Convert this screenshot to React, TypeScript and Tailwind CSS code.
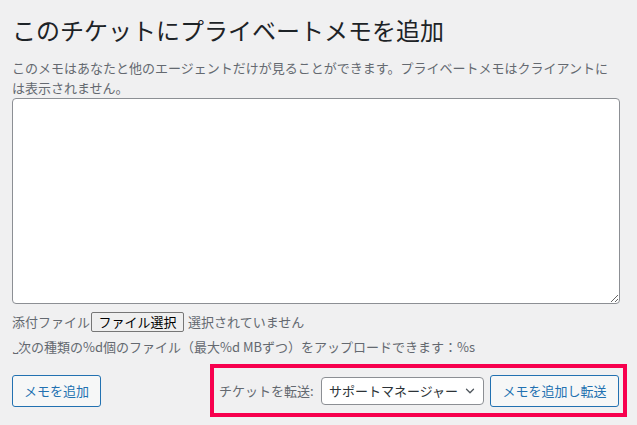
import { ChevronDown } from 'lucide-react'

const jp = "font-['Noto_Sans_CJK_JP','Noto_Sans',sans-serif]"

export default function App() {
  return (
    <div className={`${jp} min-h-[425px] w-[637px] bg-[#f0f0f1] pl-3 pr-[10px] pt-[14px] text-[13px] text-[#50575e]`}>
      {/* Title */}
      <h2 className="text-[24px] leading-[31px] font-normal text-[#1d2327]">このチケットにプライベートメモを追加</h2>

      {/* Description */}
      <p className="mt-[13px] w-[608px] text-[13px] leading-[20px] text-[#646970]">
        このメモはあなたと他のエージェントだけが見ることができます。プライベートメモはクライアントには表示されません。
      </p>

      {/* Note textarea */}
      <textarea className="block h-[206px] w-[608px] rounded-[4px] border border-[#8c8f94] bg-white px-2 py-1 text-[13px] text-[#1d2327] outline-none" />

      {/* Attachments */}
      <div className="mt-2 flex h-5 items-center leading-5 text-[#646970]">
        <span>添付ファイル</span>
        <button className="ml-px flex h-5 w-[93px] items-center justify-center rounded-[2px] border border-[#767676] bg-[#efefef] text-[13px] text-black">
          ファイル選択
        </button>
        <span className="ml-1">選択されていません</span>
      </div>
      <p className="mt-[5px] pl-px leading-5 text-[#646970]">
        ⎵次の種類の%d個のファイル（最大%d MBずつ）をアップロードできます：%s
      </p>

      {/* Actions */}
      <div className="mt-[7px] flex items-center justify-between">
        <button className="h-8 w-[89px] rounded-[3px] border border-[#2271b1] bg-[#f6f7f7] text-[13px] text-[#2271b1]">
          メモを追加
        </button>
        <div className="flex h-[53px] w-[417px] items-center border-4 border-[#f7004e] pl-[5px] pr-1">
          <span className="text-[#646970]">チケットを転送:</span>
          <div className="relative ml-auto">
            <select className="h-[28px] w-[163px] appearance-none rounded-[4px] border border-[#8c8f94] bg-white pl-[7px] pr-6 text-[13px] text-[#2c3338] outline-none">
              <option>サポートマネージャー</option>
            </select>
            <ChevronDown className="pointer-events-none absolute right-[7px] top-[7px] h-[14px] w-[14px] text-[#50575e]" strokeWidth={2.2} />
          </div>
          <button className="ml-[6px] h-8 w-[129px] rounded-[3px] border border-[#2271b1] bg-[#f6f7f7] text-[13px] text-[#2271b1]">
            メモを追加し転送
          </button>
        </div>
      </div>
    </div>
  )
}
